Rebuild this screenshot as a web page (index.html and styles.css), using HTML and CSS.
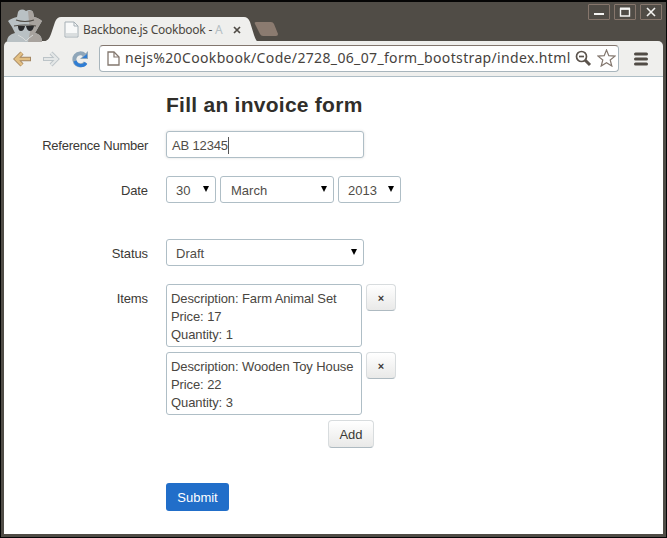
FILE: index.html
```html
<!DOCTYPE html>
<html lang="en">
<head>
<meta charset="utf-8">
<title>Backbone.js Cookbook</title>
<link rel="stylesheet" href="styles.css">
</head>
<body>
<div class="window">
  <header class="titlebar">
    <svg class="spy" width="38" height="33" viewBox="0 0 38 33">
      <path d="M1 33c0-6 4-8 8-9l-3-6-4-6c2-2 5-3 9-4l1-5c2-3 5-3 8-1 3-2 6-1 7 1l1 5c4 1 6 2 8 4l-3 5-4 7c5 1 7 4 7 9z" fill="#b9c1c4"/>
      <path d="M22 2q4-1 5 1l1 5c4 1 6 2 8 4l-3 5-4 7c5 1 7 4 7 9H22l2-10z" fill="#a8a39e"/>
      <path d="M10 11q9 3 18 0M8 17q11-2 22 0" fill="none" stroke="#4f4b45" stroke-width="1.2"/>
      <path d="M12 17h7q-1 5-4 5t-3-5zm8 0h8q-1 5-4 5t-4-5z" fill="#28292b"/>
      <path d="M12 26l5 3 3 3 3-3 4-3" fill="none" stroke="#d7dad9"/>
    </svg>
    <div class="tab">
      <svg class="tab-shape" width="216" height="25" viewBox="0 0 216 25"><path d="M0 25C6 24 7 22 9 17L13 5Q15 0 19 0H202Q206 0 208 5L212 18Q214 24 216 25z" fill="#efefed"/></svg>
      <svg class="tab-page" width="15" height="17" viewBox="0 0 15 17"><path d="M1 1h9l4 4v11H1z" fill="#f8f9f9" stroke="#a5afb5"/><path d="M10 1v4h4" fill="none" stroke="#a5afb5"/><path d="M2 12h11v3H2z" fill="#dadedf"/></svg>
      <span class="tab-title">Backbone.js Cookbook - <i>A</i></span>
      <svg class="tab-close" width="8" height="8" viewBox="0 0 8 8"><path d="M1 1l6 6M7 1L1 7" stroke="#4f4b45" stroke-width="1.7"/></svg>
    </div>
    <svg class="new-tab" width="25" height="14" viewBox="0 0 25 14"><path d="M2 0h15q2 0 3 2l4 10q0 2-2 2H9q-2 0-3-2L1 2q-1-2 1-2z" fill="#8b7b70"/></svg>
    <div class="controls">
      <span><svg width="20" height="14" viewBox="0 0 20 14"><path d="M5 9h10" stroke="#f4f4f2" stroke-width="2"/></svg></span>
      <span><svg width="20" height="14" viewBox="0 0 20 14"><path d="M5.5 4h9v7h-9z" fill="none" stroke="#f4f4f2" stroke-width="1.4"/><path d="M5 3.5h10" stroke="#f4f4f2" stroke-width="2"/></svg></span>
      <span><svg width="20" height="14" viewBox="0 0 20 14"><path d="M6 3l8 8M14 3l-8 8" stroke="#f4f4f2" stroke-width="1.6"/></svg></span>
    </div>
  </header>
  <nav class="toolbar">
    <svg class="back" width="19" height="16" viewBox="0 0 19 16"><path d="M9 2L3 8l6 6M4 8h14" fill="none" stroke="#a48763" stroke-width="4.4"/><path d="M9 2L3 8l6 6M4 8h13" fill="none" stroke="#e2bf83" stroke-width="2.6"/></svg>
    <svg class="forward" width="18" height="16" viewBox="0 0 18 16"><path d="M9 2l6 6-6 6M1 8h14" fill="none" stroke="#bcc4c8" stroke-width="4"/><path d="M9 2l6 6-6 6M2 8h13" fill="none" stroke="#e4e7e7" stroke-width="2.2"/></svg>
    <svg class="reload" width="17" height="18" viewBox="0 0 17 18"><path d="M13.5 12.5A6 6 0 1 1 12.5 5" fill="none" stroke="#8fa6b9" stroke-width="4"/><path d="M16 1v8H8z" fill="#8fa6b9"/><path d="M14 13A6.2 6.2 0 0 1 3 11" fill="none" stroke="#2f7dd4" stroke-width="3"/><path d="M15 4v4h-5z" fill="#2f7dd4"/></svg>
    <div class="address">
      <svg class="page" width="13" height="15" viewBox="0 0 13 15"><path d="M1 1h6l5 5v8H1z" fill="#fff" stroke="#83776e" stroke-width="1.3"/><path d="M7 1v5h5" fill="none" stroke="#83776e" stroke-width="1.2"/></svg>
      <span class="url">nejs%20Cookbook/Code/2728_06_07_form_bootstrap/index.html</span>
      <svg class="lens" width="17" height="17" viewBox="0 0 17 17"><circle cx="6.5" cy="6.5" r="5" fill="#fff" stroke="#5b534c" stroke-width="1.7"/><path d="M4 6.5h5" stroke="#5b534c" stroke-width="1.7"/><path d="M10 10l5 5" stroke="#5b534c" stroke-width="3"/></svg>
      <svg class="star" width="19" height="18" viewBox="0 0 19 18"><path d="M9.5 1l2.3 5.7 6.2.4-4.8 3.9 1.6 6-5.3-3.3L4.2 17l1.6-6L1 7.1l6.2-.4z" fill="#fff" stroke="#83776e" stroke-width="1.2"/></svg>
    </div>
    <svg class="menu" width="14" height="14" viewBox="0 0 14 14"><path d="M1.5 2h11M1.5 7h11M1.5 12h11" stroke="#504b45" stroke-width="3" stroke-linecap="round"/></svg>
  </nav>
  <main>
    <h1>Fill an invoice form</h1>
    <form>
      <label class="reference">Reference Number</label>
      <div class="field text-field"><span>AB 12345</span><b class="caret"></b></div>
      <label>Date</label>
      <div class="dates">
        <div class="field select day">30<i></i></div>
        <div class="field select month">March<i></i></div>
        <div class="field select year">2013<i></i></div>
      </div>
      <label>Status</label>
      <div class="field select status">Draft<i></i></div>
      <label>Items</label>
      <div class="items">
        <div class="item"><p>Description: Farm Animal Set<br>Price: 17<br>Quantity: 1</p><button type="button" class="remove">×</button></div>
        <div class="item"><p>Description: Wooden Toy House<br>Price: 22<br>Quantity: 3</p><button type="button" class="remove">×</button></div>
        <button type="button" class="add">Add</button>
        <button type="button" class="submit">Submit</button>
      </div>
    </form>
  </main>
</div>
</body>
</html>
```
FILE: styles.css
```css
* { box-sizing: border-box; }
body { margin: 0; overflow: hidden; }
svg { display: block; flex: none; }
.window { width: 667px; height: 538px; border: 1px solid #050505; border-width: 2px 1px 1px; background: #504c46; padding: 0 3px 3px; font: 13px/18px "Liberation Sans", Arial, sans-serif; color: #3b3935; }
.titlebar { height: 39px; display: flex; align-items: flex-start; position: relative; }
.spy { margin: 7px 0 0 2px; }
.tab { width: 216px; height: 25px; margin: 15px 0 0 -2px; position: relative; display: flex; align-items: center; padding-left: 22px; font: 12px/16px "Noto Sans", sans-serif; color: #4b4741; }
.tab-shape { position: absolute; left: 0; top: 0; }
.tab-page, .tab-title, .tab-close { position: relative; }
.tab-title { width: 141px; margin-left: 4px; white-space: nowrap; letter-spacing: -.25px; }
.tab-title i { font-style: normal; color: #b4bec3; }
.tab-close { margin-left: 9px; }
.new-tab { margin: 20px 0 0 -4px; }
.controls { margin: 2px 1px 0 auto; display: flex; gap: 4px; }
.controls span { width: 22px; height: 16px; border: 1px solid #86766c; border-radius: 1px; }
.toolbar { height: 36px; background: #efefed; border-bottom: 1px solid #afbec6; border-radius: 5px 5px 0 0; display: flex; align-items: center; padding: 0 15px 0 9px; }
.forward { margin-left: 10px; }
.reload { margin-left: 12px; }
.address { width: 520px; height: 27px; margin: -1px 0 0 10px; border: 1px solid #a8b5bc; border-top-color: #82766e; border-radius: 4px; background: #fff; display: flex; align-items: center; padding-left: 7px; }
.url { width: 447px; margin-left: 5px; font: 14px/20px "Noto Sans", sans-serif; letter-spacing: .35px; color: #46423d; white-space: nowrap; }
.lens { margin-left: 3px; }
.star { margin-left: 5px; }
.menu { margin-left: auto; }
main { height: 457px; background: #fff; }
h1 { margin: 0; padding: 17px 0 0 162px; height: 54px; font-size: 21px; line-height: 21px; font-weight: bold; letter-spacing: .26px; color: #302e2a; }
form { display: grid; grid-template-columns: 144px 235px; column-gap: 18px; grid-template-rows: 45px 63px 45px auto; }
label { text-align: right; padding-top: 6px; letter-spacing: -.1px; }
.reference { letter-spacing: -.25px; }
.field { height: 27px; border: 1px solid #afbec6; border-radius: 3px; background: #fff; display: flex; align-items: center; padding: 2px 8px 0 9px; color: #504d48; }
.text-field { width: 198px; padding-left: 5px; letter-spacing: -.15px; box-shadow: 0 0 3px #ddd; }
.caret { width: 1px; height: 17px; background: #555; }
.dates { display: flex; gap: 4px; }
.select i { width: 0; height: 0; margin: -3px 0 0 auto; border: solid transparent; border-width: 6px 3.5px 0; border-top-color: #000; }
.day { width: 50px; padding-right: 6px; }
.month { width: 114px; padding-left: 10px; padding-right: 6px; }
.year { width: 63px; padding-right: 6px; }
.status { width: 198px; padding-right: 6px; }
.item { display: flex; gap: 4px; margin-bottom: 5px; }
.item p { width: 196px; height: 63px; margin: 0; padding: 5px 4px; border: 1px solid #afbec6; border-radius: 3px; white-space: nowrap; letter-spacing: -.1px; color: #494641; }
button { font: 13px/18px "Liberation Sans", Arial, sans-serif; color: #3b3935; border: 1px solid #d8dcde; border-bottom-color: #aebac1; border-radius: 4px; background: linear-gradient(#fff, #e9e9e8); padding: 2px 0 0; display: block; }
.remove { width: 30px; height: 27px; padding: 0; font-size: 11px; font-weight: bold; }
.add { width: 46px; height: 28px; margin-left: 162px; }
.submit { width: 63px; height: 28px; margin-top: 35px; border: 0; border-radius: 3px; background: #216ec9; color: #fff; }
```
